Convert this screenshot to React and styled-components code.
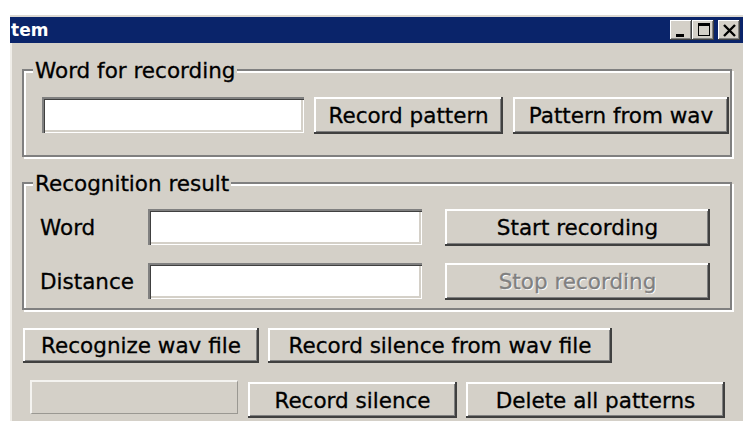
import React from "react";
import styled, { createGlobalStyle } from "styled-components";

const GlobalStyle = createGlobalStyle`
  html, body {
    margin: 0;
    background: #ffffff;
    overflow: hidden;
  }
  body {
    font-family: "DejaVu Sans", Verdana, sans-serif;
  }
`;

const Window = styled.div`
  margin: 15px 0 0 10px;
  width: 733px;
  height: 406px;
  overflow: hidden;
  background: #d4d0c8;
  border-top: 2px solid #dcd9d2;
  box-sizing: border-box;
`;

const TitleBar = styled.div`
  height: 26px;
  background: #0a246a;
  display: flex;
  align-items: center;
  justify-content: space-between;
  padding-right: 3px;
`;

const Title = styled.span`
  color: #ffffff;
  font: bold 17px "DejaVu Sans", Verdana, sans-serif;
  padding-left: 1px;
`;

const Caps = styled.div`
  display: flex;
  align-items: center;
`;

const CapButton = styled.div`
  width: 22px;
  height: 20px;
  margin-left: ${(p) => p.$gap || 0}px;
  background: #d4d0c8;
  box-shadow: inset -1px -1px 0 #404040, inset 1px 1px 0 #ffffff,
    inset -2px -2px 0 #808080;
  display: flex;
  svg {
    display: block;
  }
`;

const Body = styled.div`
  border-left: 2px solid #f0eee9;
  padding: 14px 0 0 10px;
  height: 100%;
`;

const Group = styled.fieldset`
  box-sizing: border-box;
  width: 710px;
  margin: ${(p) => p.$top || 0}px 0 0 0;
  padding: 0;
  border: 2px solid #808080;
  box-shadow: inset 2px 2px 0 #ffffff, 2px 2px 0 #ffffff;
  min-width: 0;
`;

const Legend = styled.legend`
  margin-left: 9px;
  padding: 2px 2px 0;
  line-height: 24px;
  font-size: 21.5px;
  color: #000;
  background: #d4d0c8;
  -webkit-text-stroke: 0.3px #000;
`;

const Row = styled.div`
  display: flex;
  align-items: flex-start;
  gap: ${(p) => p.$gap || 9}px;
  padding: ${(p) => p.$pad || 0};
  margin: ${(p) => p.$margin || 0};
`;

const ResultGrid = styled.div`
  display: grid;
  grid-template-columns: 108px 297px 265px;
  grid-template-rows: 36px 36px;
  row-gap: 18px;
  align-items: center;
  padding: 13px 0 9px 16px;
`;

const Label = styled.span`
  font-size: 21.5px;
  color: #000;
  -webkit-text-stroke: 0.3px #000;
`;

const Field = styled.input`
  box-sizing: border-box;
  width: ${(p) => p.$w}px;
  height: 36px;
  margin: 0;
  padding: 0 6px;
  border: none;
  background: #ffffff;
  box-shadow: inset 2px 2px 0 #808080, inset 3px 3px 0 #404040,
    inset -1px -1px 0 #ffffff, inset -3px -3px 0 #d4d0c8;
  font: 21.5px "DejaVu Sans", Verdana, sans-serif;
  outline: none;
`;

const Button = styled.button`
  box-sizing: border-box;
  width: ${(p) => p.$w}px;
  height: ${(p) => p.$h || 36}px;
  margin: ${(p) => p.$margin || 0};
  padding: 0;
  border: none;
  background: #d4d0c8;
  box-shadow: inset -2px -2px 0 #404040, inset 2px 2px 0 #ffffff,
    inset -3px -3px 0 #808080;
  font: 21.5px "DejaVu Sans", Verdana, sans-serif;
  color: #000;
  -webkit-text-stroke: 0.3px #000;
  &:disabled {
    color: #808080;
    -webkit-text-stroke: 0.3px #808080;
    text-shadow: 1px 1px 0 #ffffff;
  }
`;

const Blank = styled.div`
  box-sizing: border-box;
  width: 208px;
  height: 34px;
  margin: -2px 1px 0 8px;
  border-top: 2px solid #f4f3f0;
  border-left: 2px solid #f4f3f0;
  border-bottom: 1px solid #9a9892;
  border-right: 1px solid #9a9892;
`;

function MinGlyph() {
  return (
    <svg width="22" height="20" viewBox="0 0 22 20">
      <rect x="6" y="14" width="8" height="3" fill="#000" />
    </svg>
  );
}

function MaxGlyph() {
  return (
    <svg width="22" height="20" viewBox="0 0 22 20">
      <rect x="6.5" y="4.5" width="11" height="11" fill="none" stroke="#000" />
      <rect x="6" y="3" width="12" height="3" fill="#000" />
    </svg>
  );
}

function CloseGlyph() {
  return (
    <svg width="22" height="20" viewBox="0 0 22 20">
      <path d="M6 5 L17 16 M17 5 L6 16" stroke="#000" strokeWidth="2.4" />
    </svg>
  );
}

export default function App() {
  return (
    <>
      <GlobalStyle />
      <Window>
        <TitleBar>
          <Title>tem</Title>
          <Caps>
            <CapButton><MinGlyph /></CapButton>
            <CapButton><MaxGlyph /></CapButton>
            <CapButton $gap={4}><CloseGlyph /></CapButton>
          </Caps>
        </TitleBar>
        <Body>
          <Group>
            <Legend>Word for recording</Legend>
            <Row $pad="14px 0 21px 18px" $gap={10}>
              <Field $w={262} />
              <Button $w={189} $h={37}>Record pattern</Button>
              <Button $w={216} $h={37}>Pattern from wav</Button>
            </Row>
          </Group>
          <Group $top={13}>
            <Legend>Recognition result</Legend>
            <ResultGrid>
              <Label>Word</Label>
              <Field $w={274} />
              <Button $w={265} $h={37}>Start recording</Button>
              <Label>Distance</Label>
              <Field $w={274} />
              <Button $w={265} $h={37} disabled>Stop recording</Button>
            </ResultGrid>
          </Group>
          <Row $margin="18px 0 0 1px">
            <Button $w={236} $h={35}>Recognize wav file</Button>
            <Button $w={344} $h={35}>Record silence from wav file</Button>
          </Row>
          <Row $margin="19px 0 0 0">
            <Blank />
            <Button $w={209}>Record silence</Button>
            <Button $w={259}>Delete all patterns</Button>
          </Row>
        </Body>
      </Window>
    </>
  );
}
